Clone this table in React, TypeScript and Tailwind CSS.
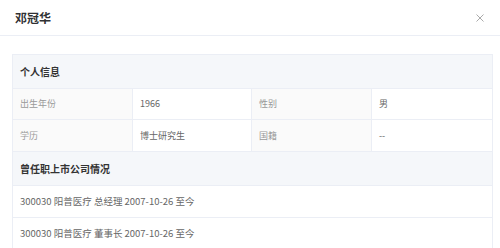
import React from "react";

const font = { fontFamily: '"Noto Sans CJK SC", "Noto Sans", sans-serif' };

function InfoCell({ label, value, last }: { label: string; value: string; last?: boolean }) {
  return (
    <>
      <div className="flex items-center bg-[#fafafa] border-r border-[#ebeef5] px-[7px] text-[9px] text-[#999999]">
        {label}
      </div>
      <div
        className={`flex items-center bg-white px-[7px] text-[9px] text-[#666666] ${last ? "" : "border-r border-[#ebeef5]"}`}
      >
        {value}
      </div>
    </>
  );
}

function SectionTitle({ children }: { children: React.ReactNode }) {
  return (
    <div className="flex h-[34px] items-center border-b border-[#ebeef5] bg-[#f5f7fa] px-[7px] text-[10px] font-bold text-[#333333]">
      {children}
    </div>
  );
}

export default function App() {
  const posts = [
    "300030 阳普医疗 总经理 2007-10-26 至今",
    "300030 阳普医疗 董事长 2007-10-26 至今",
  ];
  return (
    <div className="h-[248px] w-[500px] overflow-hidden bg-white" style={font}>
      <div className="flex h-[36px] items-center justify-between border-b border-[#ebeef5] pl-[15px] pr-[16px]">
        <span className="text-[12px] font-bold text-[#303133]">邓冠华</span>
        <svg width="8" height="8" viewBox="0 0 8 8" className="text-[#a0a0a0]">
          <path d="M0.5 0.5 L7.5 7.5 M7.5 0.5 L0.5 7.5" stroke="currentColor" strokeWidth="0.9" />
        </svg>
      </div>
      <div className="pl-[12px] pr-[7px] pt-[18px]">
        <div className="border border-b-0 border-[#ebeef5]">
          <SectionTitle>个人信息</SectionTitle>
          <div className="grid h-[31px] grid-cols-[120px_119px_120px_1fr] border-b border-[#ebeef5]">
            <InfoCell label="出生年份" value="1966" />
            <InfoCell label="性别" value="男" last />
          </div>
          <div className="grid h-[32px] grid-cols-[120px_119px_120px_1fr] border-b border-[#ebeef5]">
            <InfoCell label="学历" value="博士研究生" />
            <InfoCell label="国籍" value="--" last />
          </div>
          <SectionTitle>曾任职上市公司情况</SectionTitle>
          {posts.map((p) => (
            <div
              key={p}
              className="flex h-[32px] items-center border-b border-[#ebeef5] px-[7px] text-[9.5px] text-[#666666]"
            >
              {p}
            </div>
          ))}
        </div>
      </div>
    </div>
  );
}
